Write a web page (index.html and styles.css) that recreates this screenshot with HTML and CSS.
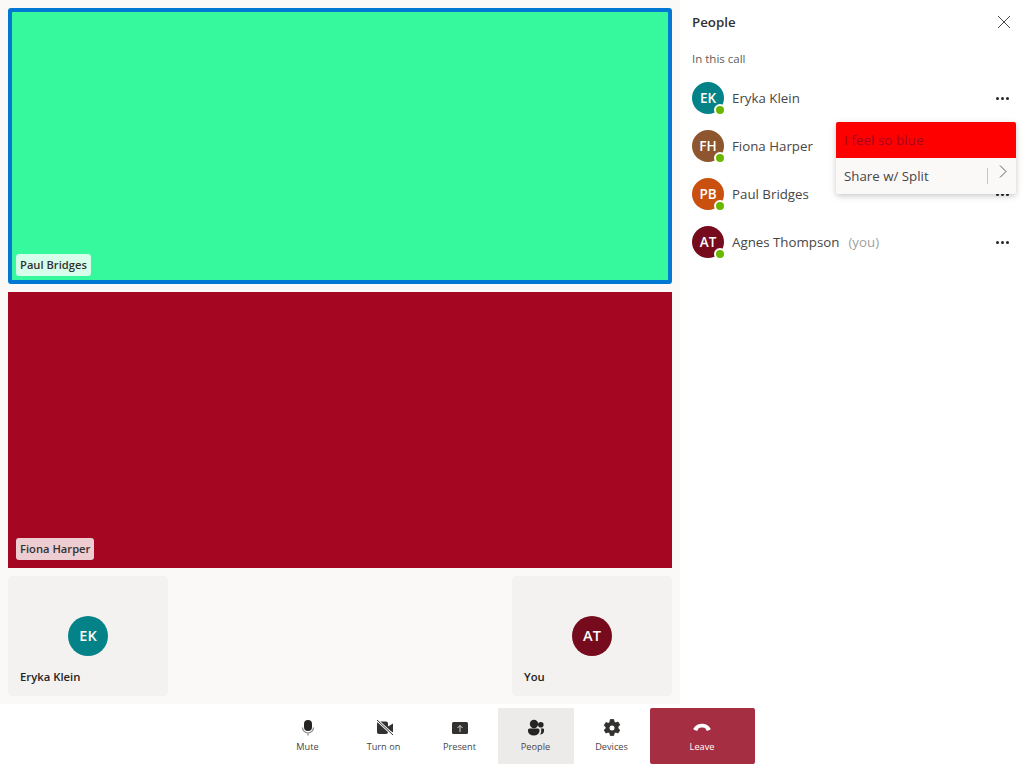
FILE: index.html
```html
<!DOCTYPE html>
<html>
	<head>
		<meta charset="utf-8">
		<title>Call</title>
		<link rel="stylesheet" href="styles.css">
	</head>
	<body>
		<div class="main">
			<div class="stage">
				<div class="video video-green active"><span class="tag">Paul Bridges</span></div>
				<div class="video video-red"><span class="tag">Fiona Harper</span></div>
				<div class="thumbs">
					<div class="thumb">
						<div class="avatar avatar-big teal">EK</div>
						<span class="thumb-name">Eryka Klein</span>
					</div>
					<div class="thumb">
						<div class="avatar avatar-big wine">AT</div>
						<span class="thumb-name">You</span>
					</div>
				</div>
			</div>
			<div class="panel">
				<div class="panel-head">
					<h2>People</h2>
					<svg class="close" width="14" height="14" viewBox="0 0 14 14"><path d="M1 1l12 12M13 1L1 13" stroke="#484644" fill="none"/></svg>
				</div>
				<p class="section">In this call</p>
				<ul class="people">
					<li>
						<div class="avatar teal">EK<i class="dot"></i></div>
						<span class="name">Eryka Klein</span>
						<span class="more"><b></b><b></b><b></b></span>
					</li>
					<li>
						<div class="avatar brown">FH<i class="dot"></i></div>
						<span class="name">Fiona Harper</span>
						<span class="more"><b></b><b></b><b></b></span>
					</li>
					<li>
						<div class="avatar orange">PB<i class="dot"></i></div>
						<span class="name">Paul Bridges</span>
						<span class="more"><b></b><b></b><b></b></span>
					</li>
					<li>
						<div class="avatar wine">AT<i class="dot"></i></div>
						<span class="name">Agnes Thompson</span>
						<span class="you">(you)</span>
						<span class="more"><b></b><b></b><b></b></span>
					</li>
				</ul>
				<div class="menu">
					<div class="menu-top">I feel so blue</div>
					<div class="menu-row">
						<span>Share w/ Split</span>
						<i class="menu-sep"></i>
						<svg class="menu-arrow" width="8" height="13" viewBox="0 0 8 13"><path d="M1 .5l6 6-6 6" stroke="#605e5c" fill="none"/></svg>
					</div>
				</div>
			</div>
		</div>
		<div class="toolbar">
			<div class="tool">
				<svg width="20" height="20" viewBox="0 0 20 20"><rect x="6" y="2" width="8" height="11" rx="4" fill="#252423"/><path d="M4.500 9.500a5.500 5.500 0 0 0 11 0M10 15v2.500" stroke="#8a8886" stroke-width="1.200" fill="none"/></svg>
				<span>Mute</span>
			</div>
			<div class="tool">
				<svg width="20" height="20" viewBox="0 0 20 20"><rect x="3" y="3.500" width="11" height="12.500" rx="2" fill="#323130"/><path d="M14 8.500l5-3v9l-5-3z" fill="#323130"/><path d="M3 2l16 15" stroke="#fff" stroke-width="2.400"/><path d="M3 2l16 15" stroke="#323130"/></svg>
				<span>Turn on</span>
			</div>
			<div class="tool">
				<svg width="20" height="20" viewBox="0 0 20 20"><rect x="2" y="4" width="16" height="12" rx="1.500" fill="#323130"/><path d="M10 14V7.500M7.500 10L10 7.500 12.500 10" stroke="#d8d6d4" fill="none"/></svg>
				<span>Present</span>
			</div>
			<div class="tool tool-on">
				<svg width="20" height="20" viewBox="0 0 20 20"><circle cx="8" cy="6" r="4.200" fill="#252423"/><circle cx="14.800" cy="6.800" r="2.800" fill="#252423"/><path d="M2 12a1.500 1.500 0 0 1 1.500-1.500h8.500a1.500 1.500 0 0 1 1.500 1.500v1a5.700 4.500 0 0 1-11.500 0z" fill="#252423"/><path d="M14.300 10.500h2.700a1 1 0 0 1 1 1v1.500c0 2.300-1.700 3.500-4 3.500.7-1 1.200-2 1.200-3.300V12c0-.6 0-1-.9-1.500z" fill="#252423"/></svg>
				<span>People</span>
			</div>
			<div class="tool">
				<svg width="20" height="20" viewBox="0 0 20 20"><path d="M8.300 1.500h3.400l.5 2.400 1.600.9 2.300-.8 1.700 3-1.800 1.600v1.800l1.800 1.600-1.700 3-2.300-.8-1.600.9-.5 2.400H8.300l-.5-2.400-1.600-.9-2.300.8-1.700-3 1.800-1.600V9.100L2.200 7.500l1.700-3 2.300.8 1.600-.9z" fill="#323130" stroke="#323130" stroke-width=".8" stroke-linejoin="round"/><circle cx="10" cy="10" r="2.500" fill="#fff"/></svg>
				<span>Devices</span>
			</div>
			<div class="tool tool-leave">
				<svg width="20" height="20" viewBox="0 0 20 20"><path d="M1.500 10.500C3.500 7 7 5.800 10 5.800s6.500 1.200 8.500 4.700c.2.500 0 1-.4 1.200l-2.600 1c-.5.2-1 0-1.200-.4l-.8-1.800c-.8-.6-2.300-1-3.500-1s-2.700.4-3.500 1l-.8 1.800c-.2.400-.7.600-1.200.4l-2.600-1c-.4-.2-.6-.7-.4-1.200z" fill="#fff"/></svg>
				<span>Leave</span>
			</div>
		</div>
	</body>
</html>
```

FILE: styles.css
```css
*{box-sizing: border-box;}
body{margin: 0; height: 768px; overflow: hidden; background-color: #fff; color: #323130; font-family: "Open Sans", "Noto Sans", sans-serif; font-size: 13px;}
.main{display: flex; height: 704px;}

/* left side, video tiles */
.stage{width: 680px; padding: 8px 8px 8px; background-color: #faf9f8; display: flex; flex-direction: column; gap: 8px;}
.video{height: 276px; padding: 8px; display: flex; align-items: flex-end;}
.video-green{background-color: #36f89d;}
.video-red{background-color: #a50722;}
.active{border: 4px solid #0078d4; border-radius: 3px; padding: 4px;}
.tag{height: 22px; line-height: 22px; padding: 0 4px; border-radius: 3px; background-color: rgba(255,255,255,.8); font-size: 11.200px; font-weight: 600; color: #323130;}
.thumbs{display: flex; justify-content: space-between;}
.thumb{width: 160px; height: 120px; padding: 40px 12px 0; background-color: #f3f2f1; border-radius: 4px; display: flex; flex-direction: column; align-items: center; position: relative;}
.thumb-name{align-self: flex-start; margin-top: 12px; font-size: 11.300px; font-weight: 600; line-height: 18px; color: #252423;}

/* avatars */
.avatar{width: 32px; height: 32px; flex: none; border-radius: 50%; color: #fff; font-size: 13.500px; font-weight: 600; line-height: 32px; text-align: center; position: relative;}
.avatar-big{width: 40px; height: 40px; line-height: 40px; font-size: 14.500px;}
.teal{background-color: #038387;}
.brown{background-color: #8e562e;}
.orange{background-color: #ca5010;}
.wine{background-color: #750b1c;}
.dot{position: absolute; right: -2px; bottom: -2px; width: 12px; height: 12px; border-radius: 50%; background-color: #6bb700; border: 2px solid #fff;}

/* people panel */
.panel{width: 344px; padding: 0 12px; background-color: #fff; position: relative;}
.panel-head{height: 44px; display: flex; align-items: center; justify-content: space-between; padding-right: 1px;}
h2{margin: 0; font-size: 13.300px; font-weight: 600; color: #323130;}
.section{margin: 8px 0 0; font-size: 11.500px; line-height: 14px; color: #605e5c;}
.people{list-style: none; margin: 8px 0 0; padding: 0;}
.people li{height: 48px; display: flex; align-items: center; font-size: 13.300px; color: #484644;}
.name{margin-left: 8px;}
.you{margin-left: 9px; color: #a19f9d;}
.more{margin-left: auto; margin-right: 3px; display: flex; gap: 2px;}
.more b{width: 3px; height: 3px; border-radius: 50%; background-color: #252423;}

/* context menu */
.menu{position: absolute; left: 156px; top: 122px; width: 180px; border-radius: 2px; overflow: hidden; background-color: #faf9f8; box-shadow: 0 2px 6px rgba(0,0,0,.22);}
.menu-top{height: 36px; line-height: 36px; padding-left: 8px; background-color: #f00; color: #a50722; font-size: 13.500px;}
.menu-row{height: 36px; padding-left: 8px; display: flex; align-items: center; font-size: 13.300px; color: #484644; position: relative;}
.menu-sep{position: absolute; left: 151px; top: 10px; width: 1px; height: 16px; background-color: #c8c6c4;}
.menu-arrow{position: absolute; left: 163px; top: 7px;}

/* bottom toolbar */
.toolbar{height: 64px; padding: 4px 0; display: flex; justify-content: center; background-color: #fff;}
.tool{width: 76px; height: 56px; padding-top: 10px; display: flex; flex-direction: column; align-items: center; gap: 2px; font-size: 9.200px; line-height: 14px; color: #484644;}
.tool-on{background-color: #edebe9;}
.tool-leave{width: 105px; margin-left: 0; background-color: #a62e43; color: #fff; border-radius: 2px;}
```
